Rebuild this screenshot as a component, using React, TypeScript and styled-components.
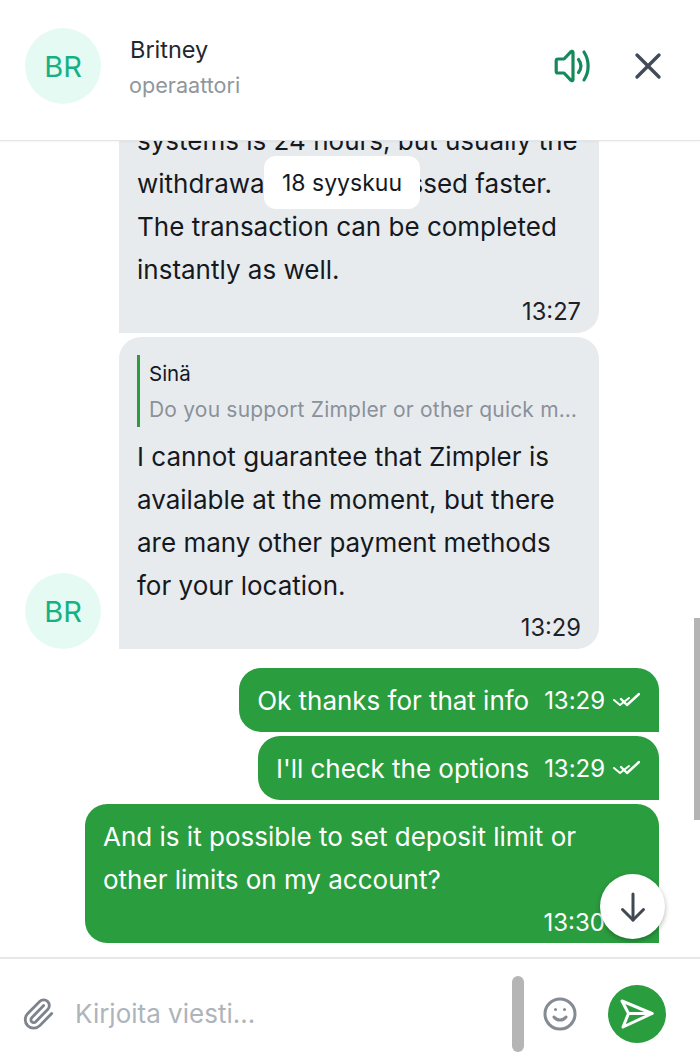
import React from 'react';
import styled, { createGlobalStyle } from 'styled-components';
import { Paperclip, Smile, X } from 'lucide-react';

const GlobalStyle = createGlobalStyle`
  html, body {
    margin: 0;
    padding: 0;
    background: #fff;
  }
  * {
    box-sizing: border-box;
  }
`;

const Page = styled.div`
  position: relative;
  width: 700px;
  height: 1064px;
  display: flex;
  flex-direction: column;
  overflow: hidden;
  font-family: Inter, 'Liberation Sans', sans-serif;
  color: #15191e;
  background: #fff;
`;

const Header = styled.header`
  position: relative;
  z-index: 2;
  flex: 0 0 141px;
  display: flex;
  align-items: flex-start;
  padding: 28px 30px 0 25px;
  background: #fff;
  border-bottom: 1px solid #e2e4e6;
  box-shadow: 0 1px 2px rgba(0, 0, 0, 0.04);
`;

const Avatar = styled.div`
  flex: 0 0 76px;
  width: 76px;
  height: 76px;
  border-radius: 50%;
  display: flex;
  align-items: center;
  justify-content: center;
  background: #e6faf4;
  color: #14b184;
  font-size: 29px;
`;

const HeaderInfo = styled.div`
  flex: 1;
  padding: 6px 0 0 29px;
`;

const Name = styled.div`
  font-size: 23.500px;
  line-height: 32px;
  color: #1f2730;
`;

const Role = styled.div`
  font-size: 21.600px;
  line-height: 38px;
  color: #8f969e;
  margin-left: -1px;
`;

const HeaderActions = styled.div`
  display: flex;
  align-items: center;
  gap: 34px;
  height: 76px;
`;

const IconButton = styled.span<{ $color: string }>`
  display: flex;
  color: ${(p) => p.$color};
`;

const Messages = styled.main`
  flex: 1;
  min-height: 0;
  display: flex;
  flex-direction: column;
  justify-content: flex-end;
  overflow: hidden;
  padding: 0 41px 14px 25px;
`;

const IncomingRow = styled.div`
  flex: none;
  display: flex;
  align-items: flex-end;
  margin-bottom: 4px;
`;

const AvatarSlot = styled.div`
  flex: 0 0 94px;
`;

const IncomingBubble = styled.div`
  width: 480px;
  padding: 18px 18px 0;
  background: #e8ebee;
  border-radius: 22px 22px 22px 0;
`;

const BubbleText = styled.div`
  font-size: 26px;
  line-height: 43px;
  color: #15191e;
`;

const BubbleTime = styled.div`
  text-align: right;
  font-size: 23.700px;
  line-height: 42px;
  color: #1c2228;
`;

const Quote = styled.div`
  border-left: 3px solid #2a9d3f;
  padding: 1px 0 0 9px;
  margin-bottom: 8px;
  height: 72px;
`;

const QuoteAuthor = styled.div`
  font-size: 20.500px;
  line-height: 36px;
  color: #15191e;
`;

const QuoteText = styled.div`
  font-size: 21px;
  line-height: 36px;
  letter-spacing: 0.2px;
  color: #8a919a;
  white-space: nowrap;
  overflow: hidden;
  text-overflow: ellipsis;
`;

const OutgoingList = styled.div`
  flex: none;
  display: flex;
  flex-direction: column;
  align-items: flex-end;
  gap: 4px;
  margin-top: 15px;
`;

const OutgoingBubble = styled.div`
  display: flex;
  align-items: center;
  gap: 15px;
  height: 64px;
  padding: 0 19px 0 18px;
  background: #2a9d3f;
  border-radius: 22px 22px 0 22px;
  color: #fff;
  font-size: 26px;
  letter-spacing: -0.03px;
`;

const OutgoingBlock = styled.div`
  width: 574px;
  height: 139px;
  padding: 11px 18px 0;
  background: #2a9d3f;
  border-radius: 22px 22px 0 22px;
  color: #fff;
  font-size: 26px;
  line-height: 43px;
`;

const OutgoingTime = styled.span`
  font-size: 24px;
  display: flex;
  align-items: center;
  gap: 7px;
`;

const BlockTime = styled.div`
  font-size: 24px;
  line-height: 43px;
  text-align: right;
  padding-right: 36px;
`;

const DatePill = styled.div`
  position: absolute;
  z-index: 1;
  left: 264px;
  top: 156px;
  width: 156px;
  height: 53px;
  border-radius: 12px;
  background: #fff;
  display: flex;
  align-items: center;
  justify-content: center;
  font-size: 23px;
  color: #15191e;
`;

const ScrollThumb = styled.div`
  position: absolute;
  right: 0;
  top: 618px;
  width: 6px;
  height: 202px;
  background: #b4b4b4;
`;

const ScrollDownButton = styled.div`
  position: absolute;
  left: 600px;
  top: 874px;
  width: 65px;
  height: 65px;
  border-radius: 50%;
  background: #fff;
  display: flex;
  align-items: center;
  justify-content: center;
  color: #3f4853;
  box-shadow: 0 2px 5px rgba(0, 0, 0, 0.3);
`;

const Footer = styled.footer`
  flex: 0 0 107px;
  display: flex;
  align-items: center;
  padding: 4px 34px 0 21px;
  border-top: 2px solid #e6e7e8;
  background: #fff;
`;

const ClipIcon = styled.span`
  display: flex;
  color: #7d848c;
  margin-right: 20px;
`;

const Placeholder = styled.div`
  flex: 1;
  font-size: 26px;
  color: #aeb4bb;
`;

const InputScrollbar = styled.div`
  width: 12px;
  height: 76px;
  border-radius: 6px;
  background: #b5b5b5;
  margin-right: 18px;
`;

const EmojiIcon = styled.span`
  display: flex;
  color: #848b93;
  margin-right: 30px;
`;

const SendButton = styled.div`
  width: 58px;
  height: 58px;
  border-radius: 50%;
  background: #2a9d3f;
  display: flex;
  align-items: center;
  justify-content: center;
  color: #fff;
`;

const Speaker = () => (
  <svg width="38" height="34" viewBox="0 0 38 34" fill="none" stroke="currentColor" strokeWidth="3.200" strokeLinecap="round" strokeLinejoin="round">
    <path d="M19 3.500c0-1.200-1.300-1.600-2-.8L10 10H4c-1 0-1.800.8-1.800 1.800v10.400c0 1 .8 1.800 1.800 1.800h6l7 7.300c.7.8 2 .4 2-.8z" />
    <path d="M24.500 10.500c3 4 3 9 0 13" />
    <path d="M30 3c5.500 8.500 5.500 19.500 0 28" />
  </svg>
);

const SendPlane = () => (
  <svg width="34" height="30" viewBox="0 0 34 30" fill="none" stroke="currentColor" strokeWidth="3" strokeLinecap="round" strokeLinejoin="round">
    <path d="M2 2 32 14.500 3 28l5.500-13.500z" />
    <path d="M8.500 14.500H32" />
  </svg>
);

const DownArrow = () => (
  <svg width="28" height="32" viewBox="0 0 28 32" fill="none" stroke="currentColor" strokeWidth="3" strokeLinecap="round" strokeLinejoin="round">
    <path d="M14 3v26" />
    <path d="M3.500 18.500 14 29l10.500-10.500" />
  </svg>
);

const DoubleCheck = () => (
  <svg width="28" height="18" viewBox="0 0 28 18" fill="none" stroke="#fff" strokeLinecap="round" strokeLinejoin="round">
    <path d="M2 9l6 5 9-7" strokeWidth="2" />
    <path d="M9 8l6 6L27 3" strokeWidth="2.400" />
  </svg>
);

const App = () => (
  <>
    <GlobalStyle />
    <Page>
      <Header>
        <Avatar>BR</Avatar>
        <HeaderInfo>
          <Name>Britney</Name>
          <Role>operaattori</Role>
        </HeaderInfo>
        <HeaderActions>
          <IconButton $color="#16895c">
            <Speaker />
          </IconButton>
          <IconButton $color="#424b57">
            <X size={44} strokeWidth={1.85} />
          </IconButton>
        </HeaderActions>
      </Header>

      <Messages>
        <IncomingRow>
          <AvatarSlot />
          <IncomingBubble>
            <BubbleText>
              systems is 24 hours, but usually the withdrawal gets processed faster. The transaction can be completed instantly as well.
            </BubbleText>
            <BubbleTime>13:27</BubbleTime>
          </IncomingBubble>
        </IncomingRow>
        <IncomingRow>
          <AvatarSlot>
            <Avatar>BR</Avatar>
          </AvatarSlot>
          <IncomingBubble>
            <Quote>
              <QuoteAuthor>Sinä</QuoteAuthor>
              <QuoteText>Do you support Zimpler or other quick methods?</QuoteText>
            </Quote>
            <BubbleText>
              I cannot guarantee that Zimpler is available at the moment, but there are many other payment methods for your location.
            </BubbleText>
            <BubbleTime>13:29</BubbleTime>
          </IncomingBubble>
        </IncomingRow>
        <OutgoingList>
          <OutgoingBubble>
            Ok thanks for that info
            <OutgoingTime>
              13:29 <DoubleCheck />
            </OutgoingTime>
          </OutgoingBubble>
          <OutgoingBubble>
            I'll check the options
            <OutgoingTime>
              13:29 <DoubleCheck />
            </OutgoingTime>
          </OutgoingBubble>
          <OutgoingBlock>
            And is it possible to set deposit limit or other limits on my account?
            <BlockTime>13:30</BlockTime>
          </OutgoingBlock>
        </OutgoingList>
      </Messages>

      <Footer>
        <ClipIcon>
          <Paperclip size={34} strokeWidth={2} />
        </ClipIcon>
        <Placeholder>Kirjoita viesti...</Placeholder>
        <InputScrollbar />
        <EmojiIcon>
          <Smile size={36} strokeWidth={2} />
        </EmojiIcon>
        <SendButton>
          <SendPlane />
        </SendButton>
      </Footer>

      <DatePill>18 syyskuu</DatePill>
      <ScrollThumb />
      <ScrollDownButton>
        <DownArrow />
      </ScrollDownButton>
    </Page>
  </>
);

export default App;
